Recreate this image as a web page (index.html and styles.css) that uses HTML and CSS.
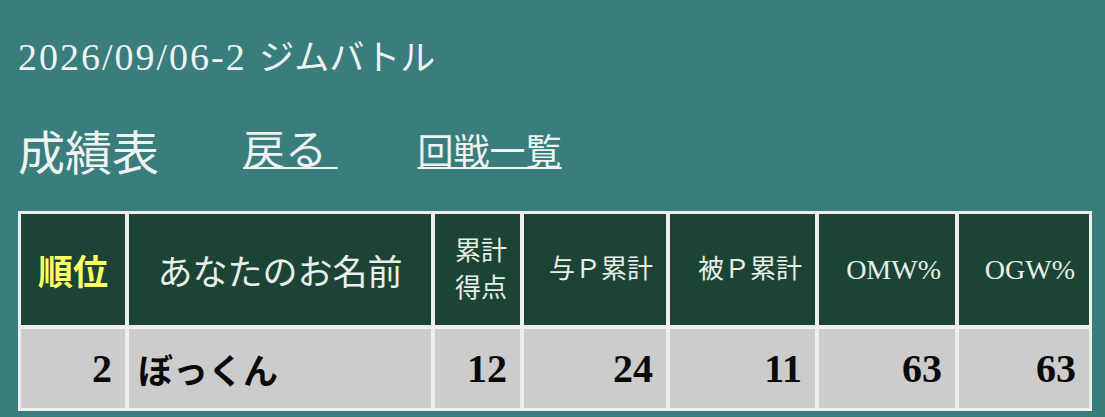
FILE: index.html
```html
<!DOCTYPE html>
<html lang="ja">
<head>
<meta charset="utf-8">
<title>成績表</title>
<link rel="stylesheet" href="styles.css">
</head>
<body>
<div class="page">
  <div class="title"><span class="title-date">2026/09/06-2</span> <span class="title-jp">ジムバトル</span></div>
  <div class="nav"><span class="heading">成績表</span><a class="back" href="#">戻る&nbsp;</a><a class="rounds" href="#">回戦一覧</a></div>
  <div class="results">
    <div class="cell head rank-head">順位</div>
    <div class="cell head name-head">あなたのお名前</div>
    <div class="cell head small">累計<br>得点</div>
    <div class="cell head small">与Ｐ累計</div>
    <div class="cell head small">被Ｐ累計</div>
    <div class="cell head small latin">OMW%</div>
    <div class="cell head small latin">OGW%</div>
    <div class="cell body num">2</div>
    <div class="cell body name">ぼっくん</div>
    <div class="cell body num">12</div>
    <div class="cell body num">24</div>
    <div class="cell body num">11</div>
    <div class="cell body num">63</div>
    <div class="cell body num">63</div>
  </div>
</div>
</body>
</html>
```
FILE: styles.css
```css
html, body {
  margin: 0;
  padding: 0;
  background: #397e7c;
}
body {
  font-family: "Liberation Serif", "Noto Sans CJK JP", serif;
  color: #eef3f2;
}
.page {
  padding: 35px 0 0 18px;
}
.title {
  font-size: 38px;
  line-height: 44px;
}
.title-date {
  letter-spacing: 2px;
}
.title-jp {
  font-size: 35px;
  margin-left: 3px;
}
.nav {
  margin-top: 45px;
  height: 56px;
  font-size: 47px;
  line-height: 56px;
  white-space: nowrap;
}
.nav a {
  color: #eef3f2;
  line-height: 40px;
  vertical-align: 5px;
  text-decoration: underline;
  text-decoration-thickness: 2px;
  text-underline-offset: 2px;
}
.back {
  font-size: 42px;
  margin-left: 84px;
}
.rounds {
  font-size: 36px;
  margin-left: 80px;
}
.results {
  display: grid;
  grid-template-columns: 104px 302px 85px 142px 145px 136px 130px;
  grid-template-rows: 111px 79px;
  gap: 4px;
  padding: 3px;
  width: 1068px;
  background: #eeeeee;
  margin-top: 29px;
}
.cell {
  display: flex;
  align-items: center;
}
.head {
  background: #1c4434;
  color: #e8eee9;
}
.rank-head {
  justify-content: center;
  color: #ffff66;
  font-weight: bold;
  font-size: 35px;
}
.name-head {
  justify-content: center;
  font-size: 35px;
}
.small {
  justify-content: flex-end;
  text-align: right;
  padding-right: 13px;
  font-size: 26px;
  line-height: 37px;
}
.latin {
  font-size: 28px;
  letter-spacing: 0;
  padding-right: 14px;
}
.body {
  background: #cccccc;
  color: #0a0a0a;
  font-weight: bold;
}
.num {
  justify-content: flex-end;
  padding-right: 13px;
  font-size: 40px;
}
.name {
  padding-left: 9px;
  font-size: 35px;
}
```
